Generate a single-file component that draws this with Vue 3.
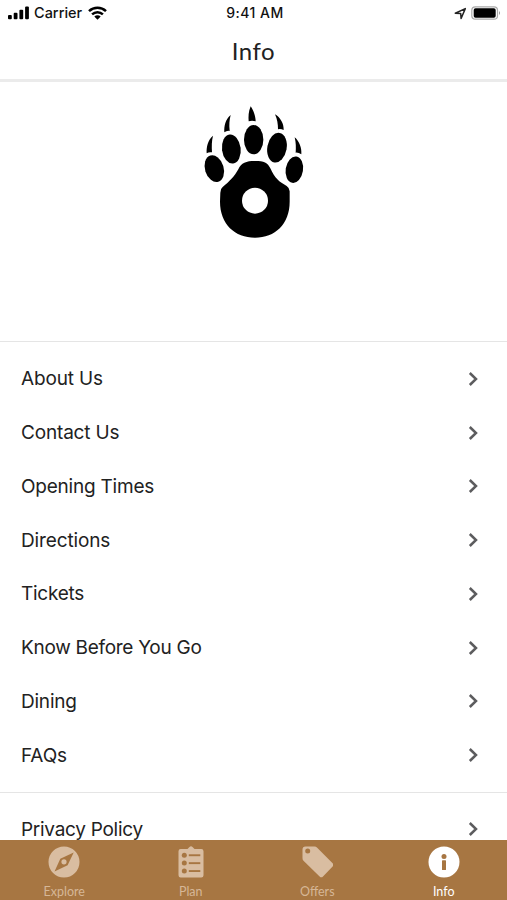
<script setup>
const mainLinks = [
  { label: 'About Us', spacing: '-0.15px' },
  { label: 'Contact Us', spacing: '-0.17px' },
  { label: 'Opening Times', spacing: '-0.22px' },
  { label: 'Directions', spacing: '-0.13px' },
  { label: 'Tickets', spacing: '-0.25px' },
  { label: 'Know Before You Go', spacing: '-0.28px' },
  { label: 'Dining', spacing: '-0.22px' },
  { label: 'FAQs', spacing: '-0.15px' }
]
const legalLinks = [{ label: 'Privacy Policy', spacing: '-0.28px' }]
const groups = [mainLinks, legalLinks]
</script>

<template>
  <div class="screen">
    <div class="status">
      <div class="side">
        <svg class="signal" width="22" height="14" viewBox="0 0 22 14">
          <rect x="0" y="9" width="3.800" height="4.300" rx="1" />
          <rect x="5.700" y="6.700" width="3.800" height="6.600" rx="1" />
          <rect x="11.400" y="3.800" width="3.800" height="9.500" rx="1" />
          <rect x="17.100" y="0.600" width="3.800" height="12.700" rx="1" />
        </svg>
        <span class="carrier">Carrier</span>
        <svg class="wifi" width="19" height="14" viewBox="0 0 19 14">
          <g fill="none" stroke="#000" stroke-width="2.500">
            <path d="M1 5.100C5.800.6 13.200.6 18 5.100" />
            <path d="M4.100 8.400c3.100-2.900 7.700-2.900 10.800 0" />
          </g>
          <path d="M6.300 10.600c1.800-1.700 4.600-1.700 6.400 0L9.500 13.800z" />
        </svg>
      </div>
      <div class="clock">9:41 AM</div>
      <div class="side right">
        <svg width="13" height="13" viewBox="0 0 13 13">
          <path d="M1.300 6.300 11.300 1.600 7.100 11.500 6.700 6.600z" fill="none" stroke="#222" stroke-width="1.500" stroke-linejoin="round" />
        </svg>
        <svg class="battery" width="31" height="14" viewBox="0 0 31 14">
          <rect x="0.800" y="0.800" width="25.700" height="12.400" rx="3.500" fill="#fff" stroke="#aaa" stroke-width="1.200" />
          <rect x="2.700" y="2.300" width="22" height="9.400" rx="1.800" />
          <path d="M28 5v4q2-2 0-4" fill="#999" />
        </svg>
      </div>
    </div>
    <header class="header">Info</header>
    <main class="content">
      <section class="brand">
        <svg width="120" height="150" viewBox="0 0 360 450">
          <path d="M76 284Q76 272 83 267C105 249 118 236 130 214C139 194 153 189 180 189C207 189 218 194 226 211C240 242 252 251 275 264Q284 270 284 280V311C284 378 240 419 180 419C120 419 75 378 75 311Z" />
          <circle cx="180" cy="308" r="39" fill="#fff" />
          <ellipse cx="58" cy="212" rx="28" ry="41" transform="rotate(-17 58 212)" />
          <ellipse cx="109" cy="153" rx="28" ry="44" transform="rotate(-7 109 153)" />
          <ellipse cx="176" cy="125" rx="29" ry="44" />
          <ellipse cx="246" cy="149" rx="29" ry="45" transform="rotate(10 246 149)" />
          <ellipse cx="298" cy="215" rx="26" ry="40" transform="rotate(9 298 215)" />
          <path d="M54 113C38 126 34 148 35 166Q42 161 51 163C50 145 50 129 54 113Z" />
          <path d="M107 51C91 64 87 84 88 103Q96 97 104 99C102 80 103 67 107 51Z" />
          <path d="M167 25C160 41 160 56 161 70Q171 67 182 70C182 54 175 37 167 25Z" />
          <path d="M240 49C247 64 249 79 249 94Q257 92 266 96C267 78 256 58 240 49Z" />
          <path d="M299 118C303 134 303 149 302 164Q310 163 319 169C321 150 313 130 299 118Z" />
        </svg>
      </section>
      <nav v-for="(links, i) in groups" :key="i" class="group">
        <a v-for="item in links" :key="item.label" class="row">
          <span class="label" :style="{ letterSpacing: item.spacing }">{{ item.label }}</span>
          <svg width="12" height="16" viewBox="0 0 12 16">
            <path d="M2.800 2 9 8 2.800 14" fill="none" stroke="#5c5c5e" stroke-width="2.500" />
          </svg>
        </a>
      </nav>
    </main>
    <footer class="tabs">
      <div class="tab">
        <svg width="32" height="32" viewBox="0 0 32 32">
          <path fill-rule="evenodd" d="M16 .5a15.500 15.500 0 1 1 0 31a15.500 15.500 0 0 1 0-31ZM25.700 6.500 12.300 12.700 6.500 25.400 19.600 19.200ZM16 13.200a2.600 2.600 0 1 1 0 5.200a2.600 2.600 0 0 1 0-5.200Z" />
        </svg>
        <span>Explore</span>
      </div>
      <div class="tab">
        <svg width="32" height="32" viewBox="0 0 32 32">
          <path d="M5.700 3H12.500L14.500 1Q16-.3 17.500 1L19.500 3H26.300a2.200 2.200 0 0 1 2.200 2.200v24a2.200 2.200 0 0 1-2.200 2.200H5.700a2.200 2.200 0 0 1-2.200-2.200v-24A2.200 2.200 0 0 1 5.700 3Z" />
          <g fill="#a77642">
            <circle cx="9.300" cy="9.300" r="2.500" /><circle cx="9.300" cy="17.100" r="2.500" /><circle cx="9.300" cy="25" r="2.500" />
            <rect x="13.800" y="8.300" width="11.500" height="1.900" /><rect x="13.800" y="16.200" width="11.500" height="1.900" /><rect x="13.800" y="24.100" width="11.500" height="1.900" />
          </g>
        </svg>
        <span>Plan</span>
      </div>
      <div class="tab">
        <svg width="32" height="32" viewBox="0 0 32 32">
          <path fill-rule="evenodd" d="M4.500.6H13.500q1.600 0 2.700 1.100L31.600 17.300q1.500 1.600 0 3.200L22 30.400q-1.700 1.700-3.400 0L2.500 14.800q-1-1-1-2.500V3.600q0-3 3-3ZM6.700 2.600a2.500 2.500 0 1 0 0 5a2.500 2.500 0 0 0 0-5Z" />
        </svg>
        <span>Offers</span>
      </div>
      <div class="tab active">
        <svg width="32" height="32" viewBox="0 0 32 32">
          <circle cx="16" cy="16" r="15.500" />
          <g fill="#a77642"><circle cx="16" cy="10.400" r="2.500" /><rect x="14" y="14.300" width="4" height="9.800" rx=".6" /></g>
        </svg>
        <span>Info</span>
      </div>
    </footer>
  </div>
</template>

<style>
body {
  margin: 0;
  background: #fff;
}
</style>

<style scoped>
.screen {
  display: flex;
  flex-direction: column;
  height: 900px;
  overflow: hidden;
  background: #fff;
  color: #222;
  font-family: Inter, "Liberation Sans", sans-serif;
}
svg {
  display: block;
  flex: none;
}
.status {
  display: grid;
  grid-template-columns: 1fr auto 1fr;
  align-items: center;
  flex: none;
  height: 26px;
  padding: 0 5px 0 8px;
  color: #111;
}
.side {
  display: flex;
  align-items: center;
}
.right {
  justify-content: flex-end;
  gap: 4px;
}
.carrier {
  margin: 0 6px 0 4px;
  font-size: 14.5px;
  font-weight: 500;
  line-height: 16px;
  padding-bottom: 1px;
}
.clock {
  padding-bottom: 1px;
  font-size: 14px;
  font-weight: 500;
  letter-spacing: 0.500px;
}
.header {
  flex: none;
  box-sizing: border-box;
  height: 56px;
  border-bottom: 3px solid #ebebeb;
  font: 24px/50px Lato, sans-serif;
  letter-spacing: 0.5px;
  text-align: center;
}
.content {
  flex: 1;
  min-height: 0;
  overflow: hidden;
}
.brand {
  display: flex;
  justify-content: center;
  box-sizing: border-box;
  height: 259px;
  padding: 16px 0 0 2px;
}
.group {
  box-sizing: border-box;
  border-top: 1px solid #e5e5e5;
  padding: 10px 0;
}
.row {
  display: flex;
  align-items: center;
  justify-content: space-between;
  height: 53.750px;
  padding: 0 28px 0 21px;
}
.label {
  font-size: 19px;
}
.group + .group .row {
  height: 52px;
}
.tabs {
  display: grid;
  grid-template-columns: repeat(4, 1fr);
  flex: none;
  height: 60px;
  padding-left: 1px;
  background: #a77642;
  color: #d6b797;
  font: 12.500px/18px Lato, sans-serif;
}
.tab {
  display: flex;
  flex-direction: column;
  align-items: center;
  gap: 5px;
  padding-top: 6px;
}
.tab svg {
  fill: #d9bda1;
}
.tab.active {
  color: #fff;
}
.tab.active svg {
  fill: #fff;
}
</style>
